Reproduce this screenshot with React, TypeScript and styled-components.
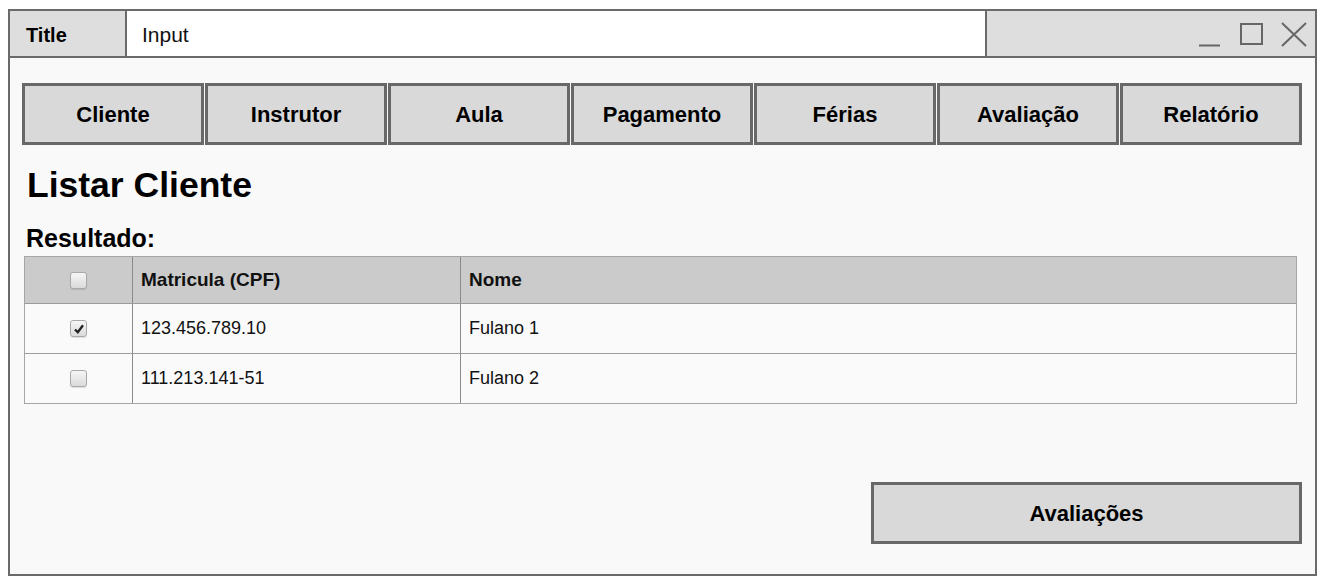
import React from "react";
import styled, { createGlobalStyle } from "styled-components";

const GlobalStyle = createGlobalStyle`
  html, body { margin: 0; padding: 0; background: #ffffff; }
  body { font-family: "Liberation Sans", Arial, sans-serif; color: #000; }
  * { box-sizing: border-box; }
`;

const Page = styled.div`
  padding: 9px 0 0 8px;
`;

const Window = styled.div`
  width: 1309px;
  height: 567px;
  border: 2px solid #6a6a6a;
  background: #f9f9f9;
  display: flex;
  flex-direction: column;
`;

const TitleBar = styled.div`
  height: 47px;
  border-bottom: 2px solid #6a6a6a;
  display: flex;
  background: #dedede;
`;

const TitleCell = styled.div`
  width: 117px;
  border-right: 2px solid #6a6a6a;
  display: flex;
  align-items: center;
  padding: 3px 0 0 16px;
  font-size: 20px;
  font-weight: bold;
`;

const InputCell = styled.div`
  width: 860px;
  background: #fff;
  border-right: 2px solid #6a6a6a;
  display: flex;
  align-items: center;
  padding: 3px 0 0 15px;
  font-size: 21px;
  color: #111;
`;

const Controls = styled.div`
  flex: 1;
  display: flex;
  justify-content: flex-end;
  align-items: flex-start;
  padding: 9px 4px 0 0;
`;

const Content = styled.div`
  flex: 1;
  display: flex;
  flex-direction: column;
  padding: 25px 13px 0 12px;
`;

const Tabs = styled.div`
  display: flex;
  gap: 1px;
`;

const Button = styled.div<{ $w: number }>`
  width: ${(p) => p.$w}px;
  height: 62px;
  border: 3px solid #686868;
  background: #d9d9d9;
  display: flex;
  align-items: center;
  justify-content: center;
  padding-top: 2px;
  font-size: 22px;
  font-weight: bold;
  color: #000;
`;

const Heading = styled.h1`
  margin: 20px 0 0 5px;
  font-size: 35.5px;
  line-height: 40px;
  font-weight: bold;
`;

const SubHeading = styled.h2`
  margin: 18px 0 0 4px;
  font-size: 25px;
  line-height: 30px;
  font-weight: bold;
`;

const Table = styled.div`
  margin: 3px 5px 0 2px;
  border: 1px solid #a6a6a6;
  display: flex;
  flex-direction: column;
`;

const Row = styled.div<{ $head?: boolean }>`
  display: grid;
  grid-template-columns: 107px 328px 1fr;
  height: ${(p) => (p.$head ? 46 : 50)}px;
  background: ${(p) => (p.$head ? "#cbcbcb" : "#fafafa")};
  border-top: ${(p) => (p.$head ? "none" : "1px solid #9c9c9c")};
`;

const Cell = styled.div<{ $head?: boolean; $center?: boolean }>`
  display: flex;
  align-items: center;
  justify-content: ${(p) => (p.$center ? "center" : "flex-start")};
  padding-left: ${(p) => (p.$center ? 0 : 8)}px;
  border-left: 1px solid #8a8a8a;
  font-size: ${(p) => (p.$head ? 19 : 18)}px;
  font-weight: ${(p) => (p.$head ? "bold" : "normal")};
  color: #111;
  &:first-child { border-left: none; }
`;

const Check = styled.span`
  width: 17px;
  height: 17px;
  border: 1px solid #a9a9a9;
  border-radius: 3px;
  background: linear-gradient(#f6f6f6, #dadada);
  box-shadow: 0 1px 1px rgba(0,0,0,0.12);
  display: flex;
  align-items: center;
  justify-content: center;
`;

const Footer = styled.div`
  display: flex;
  justify-content: flex-end;
  margin-top: 78px;
`;

const Checkbox = ({ on }: { on?: boolean }) => (
  <Check>
    {on && (
      <svg width="12" height="12" viewBox="0 0 12 12">
        <path d="M2 6.5 L4.8 9.3 L10 2.2" stroke="#222" strokeWidth="2.3" fill="none" />
      </svg>
    )}
  </Check>
);

const WinIcons = () => (
  <svg width="116" height="30" viewBox="0 0 116 30">
    <path d="M4 25.5 H25" stroke="#666" strokeWidth="2" />
    <rect x="46" y="4" width="21" height="20" stroke="#666" strokeWidth="2" fill="none" />
    <path d="M87 3 L111 26 M111 3 L87 26" stroke="#666" strokeWidth="2" fill="none" />
  </svg>
);

const tabs = ["Cliente", "Instrutor", "Aula", "Pagamento", "Férias", "Avaliação", "Relatório"];

const rows = [
  { on: true, cpf: "123.456.789.10", nome: "Fulano 1" },
  { on: false, cpf: "111.213.141-51", nome: "Fulano 2" },
];

export default function App() {
  return (
    <Page>
      <GlobalStyle />
      <Window>
        <TitleBar>
          <TitleCell>Title</TitleCell>
          <InputCell>Input</InputCell>
          <Controls>
            <WinIcons />
          </Controls>
        </TitleBar>
        <Content>
          <Tabs>
            {tabs.map((t) => (
              <Button key={t} $w={182}>{t}</Button>
            ))}
          </Tabs>
          <Heading>Listar Cliente</Heading>
          <SubHeading>Resultado:</SubHeading>
          <Table>
            <Row $head>
              <Cell $center><Checkbox /></Cell>
              <Cell $head>Matricula (CPF)</Cell>
              <Cell $head>Nome</Cell>
            </Row>
            {rows.map((r) => (
              <Row key={r.cpf}>
                <Cell $center><Checkbox on={r.on} /></Cell>
                <Cell>{r.cpf}</Cell>
                <Cell>{r.nome}</Cell>
              </Row>
            ))}
          </Table>
          <Footer>
            <Button $w={431}>Avaliações</Button>
          </Footer>
        </Content>
      </Window>
    </Page>
  );
}
